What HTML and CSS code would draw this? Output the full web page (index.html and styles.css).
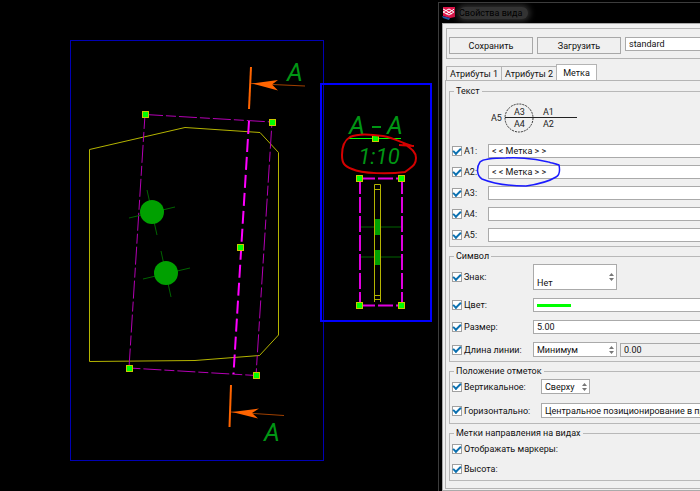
FILE: index.html
```html
<!DOCTYPE html>
<html lang="ru">
<head>
<meta charset="utf-8">
<title>Свойства вида</title>
<link rel="stylesheet" href="styles.css">
</head>
<body>
<main class="canvas">
  <svg class="drawing" viewBox="0 0 438 491" role="img" aria-label="Чертёж">
    <g fill="none">
      <rect class="frame-thin" x="70.5" y="40.500" width="253" height="420"/>
      <rect class="frame-bold" x="321" y="84" width="110" height="237"/>
      <path class="part" d="M89.500 149.500L185 127.500L260 132.500L278.500 152.500V335L259.500 355.500L195 360.500L89.500 361.500Z"/>
      <path class="cut" d="M145 114.500L272 122L256 375.500L129 368Z"/>
      <path class="cut bold" d="M249 121L233.500 374"/>
      <g class="axis">
        <path d="M147 190L157 235M129 218L175 207M161 251L171 297M143 279L190 268"/>
      </g>
      <g class="cut solid">
        <path d="M360 178V305M402 178V305" stroke-dasharray="16 3"/>
        <path d="M360 178.500H402M360 305.500H402" stroke-dasharray="15 3"/>
      </g>
      <path class="axis" d="M361 227H401M361 257H401"/>
      <path class="part" d="M374.500 302V184.500H380.500V302M375 189.500H380M375 295.500H380M375 299.500H380"/>
      <path class="underline" d="M349 138.500H401"/>
    </g>
    <g class="hole">
      <circle cx="152" cy="212" r="12"/>
      <circle cx="166" cy="273" r="12"/>
      <rect x="375" y="219" width="5" height="16"/>
      <rect x="375" y="250" width="5" height="15"/>
    </g>
    <g class="arrow">
      <path class="arrow-bar" d="M251 67L249 109"/>
      <path class="arrow-tail" d="M251 83.500L305 86"/>
      <path d="M252 83.500L278 80L272 84.500L278 90.500Z"/>
      <path class="arrow-bar" d="M231 385L229.500 427"/>
      <path class="arrow-tail" d="M231 412L284 415.500"/>
      <path d="M232 412L259 408.500L252 413L258 418.500Z"/>
    </g>
    <g class="mark">
      <text x="287" y="81">А</text>
      <text x="264" y="441">А</text>
      <text x="349" y="134">А</text>
      <path d="M372 127H381"/>
      <text x="387" y="134">А</text>
      <text class="scale" x="379" y="164" text-anchor="middle">1:10</text>
    </g>
    <g class="grip">
      <rect x="142.500" y="111.500" width="6" height="6"/>
      <rect x="269.500" y="119.500" width="6" height="6"/>
      <rect x="237.500" y="244.500" width="6" height="6"/>
      <rect x="126.500" y="365.500" width="6" height="6"/>
      <rect x="253.500" y="372.500" width="6" height="6"/>
      <rect x="372.500" y="135.500" width="6" height="6"/>
      <rect x="356.500" y="175.500" width="6" height="6"/>
      <rect x="398.500" y="175.500" width="6" height="6"/>
      <rect x="356.500" y="302.500" width="6" height="6"/>
      <rect x="398.500" y="302.500" width="6" height="6"/>
    </g>
    <path class="red-pen" d="M414 146L399 145M412 146C400 142 394 138 383 136C370 134 356 134 350 137C345 140 342 147 342 155C342 163 344 166 352 169C362 174 390 174 405 172C411 167 416 166 416 158C416 151 410 148 403 143"/>
  </svg>
</main>
<section class="dialog" aria-label="Свойства вида">
  <header class="titlebar">
    <svg class="logo" viewBox="0 0 13 14" aria-hidden="true">
      <path fill="#e0144a" d="M1 1H13V11L8 12L1 10Z"/>
      <path fill="#2458a8" d="M0 10L8 12L7 14L1 12Z"/>
      <path fill="none" stroke="#fff" stroke-width="1" d="M1 6L7 3L12 6L7 9ZM3 4L10 8M4 8L11 4M3 4L1 3M11 4L12 3"/>
    </svg>
    <h1 class="title">Свойства вида</h1>
  </header>
  <div class="client">
    <div class="toolbar">
      <button type="button">Сохранить</button>
      <button type="button">Загрузить</button>
      <input class="field preset" type="text" value="standard" aria-label="Имя набора">
    </div>
    <div class="tabs" role="tablist">
      <button type="button" role="tab">Атрибуты 1</button>
      <button type="button" role="tab">Атрибуты 2</button>
      <button type="button" role="tab" aria-selected="true" class="active">Метка</button>
    </div>
    <form class="page">
      <fieldset>
        <legend>Текст</legend>
        <svg class="scheme" viewBox="0 0 90 34" role="img" aria-label="Схема метки">
          <circle cx="29" cy="18" r="14"/>
          <path d="M15 17.500H87"/>
          <text x="1" y="21">A5</text>
          <text x="24" y="15">A3</text>
          <text x="24" y="27">A4</text>
          <text x="53" y="15">A1</text>
          <text x="53" y="27">A2</text>
        </svg>
        <div class="rows text-rows">
          <label><input type="checkbox" checked>A1:</label><input class="field" type="text" value="&lt; &lt; Метка &gt; &gt;" aria-label="A1">
          <label><input type="checkbox" checked>A2:</label><input class="field" type="text" value="&lt; &lt; Метка &gt; &gt;" aria-label="A2">
          <label><input type="checkbox" checked>A3:</label><input class="field" type="text" aria-label="A3">
          <label><input type="checkbox" checked>A4:</label><input class="field" type="text" aria-label="A4">
          <label><input type="checkbox" checked>A5:</label><input class="field" type="text" aria-label="A5">
          <svg class="blue-pen" viewBox="0 0 86 32" aria-hidden="true"><path d="M83 9C70 5 50 1 30 2C14 2 7 3 4 6C0 12 1 20 6 23C18 28 34 30 50 30C64 28 72 26 80 21C84 19 84 14 83 9C78 7 74 7 73 6"/></svg>
        </div>
      </fieldset>
      <fieldset>
        <legend>Символ</legend>
        <div class="rows symbol-rows">
          <label><input type="checkbox" checked>Знак:</label>
          <span class="combo tall"><select aria-label="Знак"><option>Нет</option></select><svg class="spin" viewBox="0 0 5 8"><path d="M0 3L2.500 0L5 3ZM0 5H5L2.500 8Z"/></svg></span>
          <label><input type="checkbox" checked>Цвет:</label>
          <button class="field color" type="button" aria-label="Цвет"><span class="swatch"></span></button>
          <label><input type="checkbox" checked>Размер:</label>
          <input class="field" type="text" value="5.00" aria-label="Размер">
          <label><input type="checkbox" checked>Длина линии:</label>
          <div class="pair">
            <span class="combo"><select aria-label="Длина линии"><option>Минимум</option></select><svg class="spin" viewBox="0 0 5 8"><path d="M0 3L2.500 0L5 3ZM0 5H5L2.500 8Z"/></svg></span>
            <input class="field muted" type="text" value="0.00" aria-label="Значение длины" readonly>
          </div>
        </div>
      </fieldset>
      <fieldset>
        <legend>Положение отметок</legend>
        <div class="rows place-rows">
          <label><input type="checkbox" checked>Вертикальное:</label>
          <span class="combo short"><select aria-label="Вертикальное"><option>Сверху</option></select><svg class="spin" viewBox="0 0 5 8"><path d="M0 3L2.500 0L5 3ZM0 5H5L2.500 8Z"/></svg></span>
          <label><input type="checkbox" checked>Горизонтально:</label>
          <span class="combo wide"><select aria-label="Горизонтально"><option>Центральное позиционирование в пределах</option></select></span>
        </div>
      </fieldset>
      <fieldset>
        <legend>Метки направления на видах</legend>
        <div class="rows view-rows">
          <label><input type="checkbox" checked>Отображать маркеры:</label>
          <label><input type="checkbox" checked>Высота:</label>
        </div>
      </fieldset>
    </form>
  </div>
</section>
</body>
</html>
```
FILE: styles.css
```css
* { box-sizing: border-box; }

body {
  margin: 0;
  min-height: 100vh;
  display: grid;
  grid-template-columns: 438fr 262fr;
  background: #000;
  color: #111;
  font: 9px/12px Roboto, "Open Sans", sans-serif;
  overflow: hidden;
}

button, input, select { font: inherit; color: inherit; margin: 0; }

.canvas { min-width: 0; }
.drawing { display: block; width: 100%; height: auto; }
.frame-thin { stroke: #0000b4; }
.frame-bold { stroke: #00f; stroke-width: 2; }
.part { stroke: #b4b400; }
.cut { stroke: #b400b4; stroke-dasharray: 18 3 10 3; }
.cut.bold { stroke: #f0f; stroke-width: 2; stroke-dasharray: 13 5; }
.cut.solid { stroke: #e000e0; stroke-width: 2; }
.axis { stroke: #006400; }
.underline { stroke: #0f0; }
.hole { fill: #00a000; }
.arrow { fill: #ff6400; }
.arrow-bar { stroke: #ff6400; stroke-width: 2; }
.arrow-tail { stroke: #a04000; }
.mark { fill: #009614; font: italic 25px Roboto, "Liberation Sans", sans-serif; }
.mark path { stroke: #009614; stroke-width: 2; }
.scale { font-size: 22px; }
.grip { fill: #0f0; stroke: #c8c800; }
.red-pen { fill: none; stroke: #d40000; stroke-width: 2; }

.dialog {
  min-width: 0;
  margin-top: 2px;
  border: 1px solid #3c3c3c;
  border-width: 1px 0 0 1px;
  padding-left: 3px;
  display: flex;
  flex-direction: column;
  overflow: hidden;
}

.titlebar { display: flex; align-items: center; gap: 4px; height: 20px; }
.logo { width: 13px; height: 14px; }
.title {
  margin: 0;
  padding: 0 6px 0 0;
  font-size: 9px;
  font-weight: 400;
  color: #000;
  background: #333;
  border-radius: 6px;
  box-shadow: 0 0 6px 2px #333;
}

.client {
  flex: 1;
  margin-right: -20px;
  padding: 4px 0 0 2px;
  background: #f0f0f0;
  border: 1px solid #aaa;
}

.toolbar {
  display: flex;
  gap: 4px;
  margin-left: 1px;
  height: 31px;
  padding: 8px 0 0 2px;
  border: 1px solid #b4b4b4;
}
.toolbar button {
  width: 84px;
  height: 17px;
  padding: 0;
  background: #f0f0f0;
  border: 1px solid #a8a8a8;
}

.field {
  min-width: 0;
  height: 14px;
  padding: 0 3px;
  background: #fff;
  border: 1px solid #aaa;
  border-radius: 0;
}
.preset { flex: 1; }

.tabs { display: flex; align-items: flex-end; margin-top: 5px; height: 16px; margin-left: 1px; }
.tabs button {
  height: 14px;
  padding: 0 3px;
  line-height: 12px;
  background: #f0f0f0;
  border: 1px solid #b4b4b4;
  border-bottom: 0;
  margin-right: -1px;
}
.tabs .active { height: 16px; padding: 0 6px; background: #fff; }

.page { border: 1px solid #b4b4b4; padding: 4px 3px; }

fieldset { min-width: 0; margin: 0 0 3px; padding: 0 2px 4px; border: 1px solid #b8b8b8; }
legend { margin-left: 2px; padding: 0 2px; height: 12px; }

.scheme { display: block; width: 90px; height: 34px; margin: 3px 0 10px 38px; }
.scheme circle { fill: none; stroke: #333; stroke-dasharray: 2 1; }
.scheme path { stroke: #222; }
.scheme text { fill: #222; font-size: 9px; }

.rows { position: relative; display: grid; align-items: center; }
.rows label { display: flex; align-items: center; gap: 2px; white-space: nowrap; }
.text-rows { grid-template-columns: 36px 1fr; row-gap: 7px; }
.symbol-rows { grid-template-columns: 81px 1fr; row-gap: 8px; padding-top: 2px; }
.place-rows { grid-template-columns: 89px 1fr; row-gap: 9px; padding: 2px 0 1px; }
.view-rows { row-gap: 8px; padding: 4px 0 1px; }

input[type="checkbox"] {
  appearance: none;
  width: 10px;
  height: 10px;
  display: grid;
  place-items: center;
  background: #fff;
  border: 1px solid #a0a0a0;
}
input[type="checkbox"]:checked::before {
  content: "";
  width: 6px;
  height: 3px;
  border: solid #0a70b0;
  border-width: 0 0 2px 2px;
  rotate: -45deg;
  translate: 0 -1px;
}

.combo { display: grid; grid-template-columns: 1fr 5px 3px; width: 84px; height: 15px; }
.combo select {
  grid-area: 1 / 1 / 2 / 4;
  min-width: 0;
  appearance: none;
  padding: 0 3px;
  background: #fff;
  border: 1px solid #aaa;
  border-radius: 0;
}
.spin { grid-area: 1 / 2; align-self: center; width: 5px; height: 8px; fill: #777; }
.tall { height: 26px; }
.tall select { padding-top: 12px; }
.short { width: 49px; }
.wide { width: 100%; }
.pair { display: grid; grid-template-columns: 84px 1fr; gap: 3px; align-items: center; }
.muted { background: #f0f0f0; }
.color { display: flex; align-items: center; }
.swatch { width: 34px; height: 3px; background: #0f0; }

.blue-pen {
  position: absolute;
  left: 24px;
  top: 12px;
  width: 86px;
  height: 32px;
  fill: none;
  stroke: #1a1aff;
  stroke-width: 1.5;
  pointer-events: none;
}
```
